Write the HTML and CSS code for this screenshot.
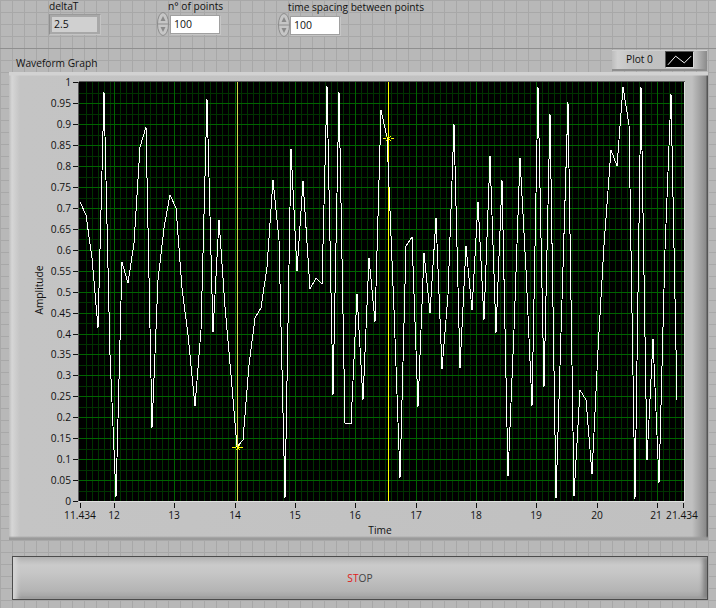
FILE: index.html
```html
<!DOCTYPE html>
<html lang="en">
<head>
<meta charset="utf-8">
<title>Waveform Graph</title>
<link rel="stylesheet" href="styles.css">
</head>
<body>
<main class="panel">
  <section class="controls">
    <div class="ctl ctl-delta">
      <div class="ctl-label">deltaT</div>
      <div class="indicator"><span class="indicator-in">2.5</span></div>
    </div>
    <div class="ctl ctl-points">
      <div class="ctl-label">n° of points</div>
      <div class="num-row">
        <div class="spin"><svg width="12" height="24" viewBox="0 0 12 24"><ellipse cx="6" cy="12" rx="5.5" ry="11.5" fill="#c6c6c6" stroke="#8c8c8c"/><path d="M1 12H11" stroke="#8c8c8c"/><path d="M6 4L3.5 9H8.500Z" fill="#8a8a8a"/><path d="M6 20L3.5 15H8.500Z" fill="#8a8a8a"/></svg></div>
        <div class="num-box">100</div>
      </div>
    </div>
    <div class="ctl ctl-spacing">
      <div class="ctl-label">time spacing between points</div>
      <div class="num-row">
        <div class="spin"><svg width="12" height="24" viewBox="0 0 12 24"><ellipse cx="6" cy="12" rx="5.5" ry="11.5" fill="#c6c6c6" stroke="#8c8c8c"/><path d="M1 12H11" stroke="#8c8c8c"/><path d="M6 4L3.5 9H8.500Z" fill="#8a8a8a"/><path d="M6 20L3.5 15H8.500Z" fill="#8a8a8a"/></svg></div>
        <div class="num-box">100</div>
      </div>
    </div>
  </section>

  <section class="graph-head">
    <div class="graph-title">Waveform Graph</div>
    <div class="legend">
      <span class="legend-name">Plot 0</span>
      <span class="legend-swatch"><svg width="28" height="16" viewBox="0 0 28 16"><path d="M2 13L10 4L19 11L26 4" fill="none" stroke="#fff"/></svg></span>
    </div>
  </section>

  <section class="graph">
    <svg class="graph-svg" width="699" height="468" viewBox="9 72 699 468">
      <rect x="79" y="82" width="605" height="419" fill="#000"/>
      <g class="g-minor">
        <path d="M86 82V501M92 82V501M98 82V501M104 82V501M110 82V501M120 82V501M126 82V501M132 82V501M138 82V501M144 82V501M150 82V501M156 82V501M162 82V501M168 82V501M180 82V501M186 82V501M192 82V501M198 82V501M204 82V501M210 82V501M216 82V501M222 82V501M228 82V501M241 82V501M247 82V501M253 82V501M259 82V501M265 82V501M271 82V501M277 82V501M283 82V501M289 82V501M301 82V501M307 82V501M313 82V501M319 82V501M325 82V501M331 82V501M337 82V501M343 82V501M349 82V501M361 82V501M367 82V501M373 82V501M379 82V501M385 82V501M391 82V501M397 82V501M403 82V501M409 82V501M422 82V501M428 82V501M434 82V501M440 82V501M446 82V501M452 82V501M458 82V501M464 82V501M470 82V501M482 82V501M488 82V501M494 82V501M500 82V501M506 82V501M512 82V501M518 82V501M524 82V501M530 82V501M542 82V501M548 82V501M554 82V501M560 82V501M566 82V501M572 82V501M578 82V501M584 82V501M591 82V501M603 82V501M609 82V501M615 82V501M621 82V501M627 82V501M633 82V501M639 82V501M645 82V501M651 82V501M663 82V501M669 82V501M675 82V501M681 82V501"/>
        <path d="M79 93H684M79 114H684M79 135H684M79 156H684M79 177H684M79 198H684M79 218H684M79 239H684M79 260H684M79 281H684M79 302H684M79 323H684M79 344H684M79 365H684M79 386H684M79 407H684M79 428H684M79 449H684M79 470H684M79 491H684"/>
      </g>
      <g class="g-major">
        <path d="M114 82V501M174 82V501M235 82V501M295 82V501M355 82V501M416 82V501M476 82V501M536 82V501M597 82V501M657 82V501"/>
        <path d="M79 103H684M79 124H684M79 145H684M79 166H684M79 187H684M79 208H684M79 229H684M79 250H684M79 271H684M79 292H684M79 313H684M79 334H684M79 354H684M79 375H684M79 396H684M79 417H684M79 438H684M79 459H684M79 480H684"/>
      </g>
      <path class="cursor-dim" d="M237 82V501"/>
      <path class="cursor" d="M388 82V501"/>
      <polyline class="trace" points="80,202 86,215 92,258 98,328 104,92 110,355 116,497 122,262 128,283 134,243 140,147 146,127 152,428 158,280 164,228 170,195 176,208 182,288 188,335 195,406 201,330 207,99 213,332 219,220 225,307 231,375 237,447 243,440 249,365 255,318 261,308 267,267 273,180 279,240 285,498 291,149 297,271 303,181 310,289 316,278 322,284 327,86 333,395 339,92 345,423 351,424 357,294 363,400 369,258 375,322 381,110 387,137 394,310 400,478 406,246 412,237 418,407 424,253 430,313 436,218 442,369 448,295 454,124 460,368 466,246 472,310 478,202 484,320 490,156 496,333 502,180 508,476 514,330 520,158 526,270 532,406 538,87 544,387 550,114 556,498 562,300 568,102 574,496 580,390 586,400 592,474 598,350 604,245 611,150 617,166 623,87 629,125 635,499 641,87 647,460 653,339 659,483 665,250 671,94 677,400"/>
      <path class="star" d="M232 447.500H236M239 447.500H243M236 445L240 450M240 445L236 450M383 138.500H386M391 138.500H394M386 136L391 141M391 136L386 141"/>
      <path class="plot-edge-dark" d="M78.500 81.500H684.500M78.500 81.500V501"/>
      <path class="plot-edge-light" d="M79 501.500H685M684.500 82V501"/>
      <path class="ticks" d="M73 82.500H78M73 103.500H78M73 124.500H78M73 145.500H78M73 166.500H78M73 187.500H78M73 208.500H78M73 229.500H78M73 250.500H78M73 271.500H78M73 292.500H78M73 313.500H78M73 334.500H78M73 354.500H78M73 375.500H78M73 396.500H78M73 417.500H78M73 438.500H78M73 459.500H78M73 480.500H78M73 501.500H78M80.500 503V508M114.500 503V508M174.500 503V508M235.500 503V508M295.500 503V508M355.500 503V508M416.500 503V508M476.500 503V508M536.500 503V508M597.500 503V508M657.500 503V508M683.500 503V508"/>
      <g class="y-labels">
        <text x="71" y="86">1</text><text x="71" y="107">0.95</text><text x="71" y="128">0.9</text><text x="71" y="149">0.85</text><text x="71" y="170">0.8</text><text x="71" y="191">0.75</text><text x="71" y="212">0.7</text><text x="71" y="233">0.65</text><text x="71" y="254">0.6</text><text x="71" y="275">0.55</text><text x="71" y="296">0.5</text><text x="71" y="317">0.45</text><text x="71" y="338">0.4</text><text x="71" y="358">0.35</text><text x="71" y="379">0.3</text><text x="71" y="400">0.25</text><text x="71" y="421">0.2</text><text x="71" y="442">0.15</text><text x="71" y="463">0.1</text><text x="71" y="484">0.05</text><text x="71" y="505">0</text>
      </g>
      <g class="x-labels">
        <text x="80" y="519">11.434</text><text x="114" y="519">12</text><text x="174" y="519">13</text><text x="235" y="519">14</text><text x="295" y="519">15</text><text x="355" y="519">16</text><text x="416" y="519">17</text><text x="476" y="519">18</text><text x="536" y="519">19</text><text x="597" y="519">20</text><text x="656" y="519">21</text><text x="682" y="519">21.434</text>
      </g>
      <text class="axis-name" x="380" y="534">Time</text>
      <text class="axis-name" transform="translate(43 290) rotate(-90)">Amplitude</text>
    </svg>
  </section>

  <section class="stop-wrap">
    <button class="stop" type="button"><span class="stop-red">ST</span>OP</button>
  </section>
</main>
</body>
</html>
```
FILE: styles.css
```css
* { box-sizing: border-box; }
html, body { margin: 0; padding: 0; }
body {
  width: 716px;
  height: 608px;
  overflow: hidden;
  font-family: "Open Sans", "Liberation Sans", sans-serif;
  font-size: 10.2px;
  color: #111;
}
.panel {
  width: 716px;
  height: 608px;
  background-color: #b8b8b8;
  background-image:
    linear-gradient(#a8a8a8 1px, transparent 1px),
    linear-gradient(90deg, #a8a8a8 1px, transparent 1px);
  background-size: 12px 12px;
  display: flex;
  flex-direction: column;
}
.controls {
  height: 49px;
  display: flex;
  align-items: flex-start;
  border-bottom: 1px solid #8f8f8f;
}
.ctl { display: flex; flex-direction: column; }
.ctl-delta { margin-left: 49px; width: 52px; }
.ctl-points { margin-left: 56px; width: 121px; }
.ctl-spacing { width: 200px; padding-top: 1px; }
.ctl-label { height: 14px; line-height: 13px; white-space: nowrap; }
.ctl-points .ctl-label { margin-left: 11px; }
.ctl-spacing .ctl-label { margin-left: 10px; }
.indicator {
  width: 52px;
  height: 21px;
  padding: 2px 3px 3px 2px;
  background: #a8a8a8;
  border-top: 1px solid #9a9a9a;
  border-left: 1px solid #909090;
  border-bottom: 1px solid #c4c4c4;
  border-right: 1px solid #c4c4c4;
}
.indicator-in {
  display: block;
  height: 15px;
  line-height: 15px;
  padding-left: 2px;
  background: #d0d0d0;
  font-size: 10.5px;
}
.num-row { display: flex; align-items: center; height: 24px; margin-top: -2px; }
.spin { width: 14px; height: 24px; display: flex; flex: none; }
.ctl-spacing .spin { width: 13px; }
.num-box {
  width: 48px;
  height: 17px;
  line-height: 17px;
  padding-left: 3px;
  background: #fff;
  font-size: 10.5px;
  box-shadow: 0 0 0 1px #a0a0a0, 1px 1px 0 1px #c6c6c6;
}
.graph-head {
  height: 23px;
  display: flex;
  justify-content: space-between;
  align-items: flex-end;
  padding-left: 16px;
  padding-right: 9px;
}
.graph-title { line-height: 14px; padding-bottom: 2px; white-space: nowrap; }
.legend {
  width: 95px;
  height: 21px;
  display: flex;
  align-items: center;
  padding-left: 14px;
  padding-bottom: 2px;
  margin-bottom: 1px;
  background: linear-gradient(90deg, #bdbdbd, #d0d0d0 6%, #c2c2c2 22%, #bebebe 88%, #8a8a8a);
  border-bottom: 2px solid #8e8e8e;
  border-top: 1px solid #d0d0d0;
}
.legend-name { width: 39px; }
.legend-swatch {
  width: 29px;
  height: 17px;
  display: flex;
  background: #000;
  border: 1px solid #d8d8d8;
  border-top-color: #555;
  border-left-color: #555;
}
.graph {
  margin-left: 9px;
  width: 699px;
  height: 468px;
  background:
    linear-gradient(#d2d2d2, #d2d2d2 3px, transparent 4px, transparent 464px, #9a9a9a 466px),
    linear-gradient(90deg, #bdbdbd 0, #d6d6d6 3px, #c4c4c4 11px, #c0c0c0 683px, #8a8a8a 697px, #555 698px);
}
.graph-svg { display: block; shape-rendering: crispEdges; }
.g-minor path { stroke: #003300; stroke-width: 1; fill: none; }
.g-major path { stroke: #006400; stroke-width: 1; fill: none; }
.cursor { stroke: #ffff00; stroke-width: 1; fill: none; }
.cursor-dim { stroke: #d4d44a; stroke-width: 1; fill: none; }
.trace { stroke: #fff; stroke-width: 1; fill: none; }
.star { stroke: #ffff00; stroke-width: 1; fill: none; }
.plot-edge-dark { stroke: #5a5a5a; stroke-width: 1; fill: none; }
.plot-edge-light { stroke: #e0e0e0; stroke-width: 1; fill: none; }
.ticks { stroke: #111; stroke-width: 1; fill: none; }
.y-labels text {
  font-family: "Open Sans", "Liberation Sans", sans-serif;
  font-size: 10.2px;
  fill: #111;
  text-anchor: end;
}
.x-labels text {
  font-family: "Open Sans", "Liberation Sans", sans-serif;
  font-size: 10.2px;
  fill: #111;
  text-anchor: middle;
}
.axis-name {
  font-family: "Open Sans", "Liberation Sans", sans-serif;
  font-size: 10.2px;
  fill: #111;
  text-anchor: middle;
}
.stop-wrap { padding: 16px 8px 0 12px; }
.stop {
  display: block;
  width: 696px;
  height: 44px;
  padding: 0;
  font: 10.2px "Open Sans", "Liberation Sans", sans-serif;
  color: #444;
  background: linear-gradient(#b4b4b4, #cacaca 8px, #c6c6c6 16px, #b4b4b4 34px, #a6a6a6 39px, #8e8e8e 42px);
  border: 1px solid #4c4c4c;
  border-radius: 0;
  box-shadow: inset 5px 0 4px -1px #d4d4d4, inset -5px 0 4px -1px #808080;
}
.stop-red { color: #e02020; }
```
